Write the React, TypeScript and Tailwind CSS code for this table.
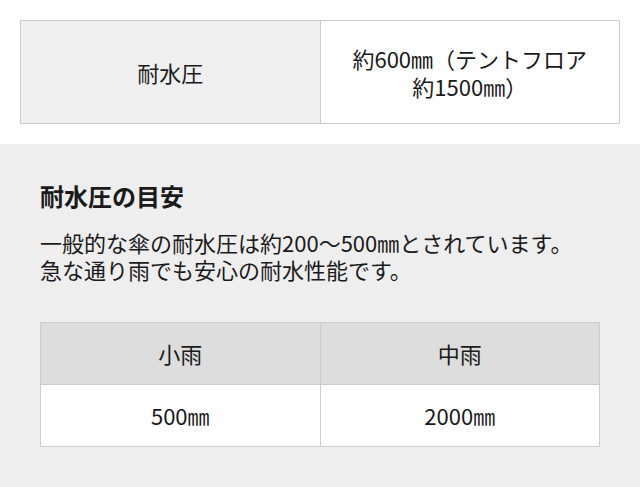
const FONT = "font-['Noto_Sans_CJK_JP','Noto_Sans',sans-serif]"

const rainLevels = [
  { label: '小雨', value: '500㎜' },
  { label: '中雨', value: '2000㎜' },
]

export default function App() {
  return (
    <div className={`${FONT} min-h-[487px] bg-white text-[#1a1a1a] text-[22px] leading-[28px]`}>
      {/* spec table */}
      <div className="p-5">
        <table className="w-full table-fixed border-collapse">
          <tbody>
            <tr>
              <th className="border border-[#cccccc] bg-[#efefef] px-5 py-[23px] text-center font-normal">
                耐水圧
              </th>
              <td className="border border-[#cccccc] bg-white px-4 py-[23px] text-center">
                約600㎜（テントフロア
                <br />
                約1500㎜）
              </td>
            </tr>
          </tbody>
        </table>
      </div>

      {/* guideline section */}
      <section className="bg-[#eeeeee] px-10 pt-[37px] pb-10">
        <h3 className="text-[24px] leading-[30px] font-bold">耐水圧の目安</h3>
        <p className="mt-[18px] leading-[27px]">
          一般的な傘の耐水圧は約200〜500㎜とされています。
          <br />
          急な通り雨でも安心の耐水性能です。
        </p>

        <table className="mt-[39px] w-full table-fixed border-collapse">
          <thead>
            <tr>
              {rainLevels.map((r) => (
                <th
                  key={r.label}
                  className="border border-[#cccccc] bg-[#dddddd] py-4 text-center font-normal leading-[29px]"
                >
                  {r.label}
                </th>
              ))}
            </tr>
          </thead>
          <tbody>
            <tr>
              {rainLevels.map((r) => (
                <td
                  key={r.label}
                  className="border border-[#cccccc] bg-white py-4 text-center leading-[29px]"
                >
                  {r.value}
                </td>
              ))}
            </tr>
          </tbody>
        </table>
      </section>
    </div>
  )
}
